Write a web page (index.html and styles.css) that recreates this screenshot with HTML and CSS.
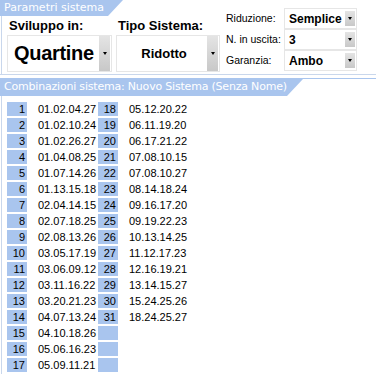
FILE: index.html
```html
<!DOCTYPE html>
<html>
<head>
<meta charset="utf-8">
<link rel="stylesheet" href="styles.css">
</head>
<body>
<div class="panel1">
  <div class="p1-left">
    <div class="tab tab1">Parametri sistema</div>
    <div class="p1-body">
      <div class="bigcol">
        <div class="biglabel">Sviluppo in:</div>
        <div class="combo big">
          <div class="cval quart">Quartine</div>
          <div class="btn"><span class="arrow"></span></div>
        </div>
      </div>
      <div class="bigcol col2">
        <div class="biglabel">Tipo Sistema:</div>
        <div class="combo big">
          <div class="cval rid">Ridotto</div>
          <div class="btn"><span class="arrow"></span></div>
        </div>
      </div>
    </div>
  </div>
  <div class="p1-right">
    <div class="srow">
      <div class="slabel">Riduzione:</div>
      <div class="combo small"><div class="cval sv">Semplice</div><div class="btn sbtn"><span class="arrow"></span></div></div>
    </div>
    <div class="srow">
      <div class="slabel">N. in uscita:</div>
      <div class="combo small"><div class="cval sv">3</div><div class="btn sbtn"><span class="arrow"></span></div></div>
    </div>
    <div class="srow">
      <div class="slabel">Garanzia:</div>
      <div class="combo small"><div class="cval sv">Ambo</div><div class="btn sbtn"><span class="arrow"></span></div></div>
    </div>
  </div>
</div>

<div class="panel2">
  <div class="tab tab2">Combinazioni sistema: Nuovo Sistema (Senza Nome)</div>
  <div class="p2-body">
    <div class="grid">
      <div class="n">1</div><div class="c">01.02.04.27</div><div class="n">18</div><div class="c">05.12.20.22</div>
      <div class="n">2</div><div class="c">01.02.10.24</div><div class="n">19</div><div class="c">06.11.19.20</div>
      <div class="n">3</div><div class="c">01.02.26.27</div><div class="n">20</div><div class="c">06.17.21.22</div>
      <div class="n">4</div><div class="c">01.04.08.25</div><div class="n">21</div><div class="c">07.08.10.15</div>
      <div class="n">5</div><div class="c">01.07.14.26</div><div class="n">22</div><div class="c">07.08.10.27</div>
      <div class="n">6</div><div class="c">01.13.15.18</div><div class="n">23</div><div class="c">08.14.18.24</div>
      <div class="n">7</div><div class="c">02.04.14.15</div><div class="n">24</div><div class="c">09.16.17.20</div>
      <div class="n">8</div><div class="c">02.07.18.25</div><div class="n">25</div><div class="c">09.19.22.23</div>
      <div class="n">9</div><div class="c">02.08.13.26</div><div class="n">26</div><div class="c">10.13.14.25</div>
      <div class="n">10</div><div class="c">03.05.17.19</div><div class="n">27</div><div class="c">11.12.17.23</div>
      <div class="n">11</div><div class="c">03.06.09.12</div><div class="n">28</div><div class="c">12.16.19.21</div>
      <div class="n">12</div><div class="c">03.11.16.22</div><div class="n">29</div><div class="c">13.14.15.27</div>
      <div class="n">13</div><div class="c">03.20.21.23</div><div class="n">30</div><div class="c">15.24.25.26</div>
      <div class="n">14</div><div class="c">04.07.13.24</div><div class="n">31</div><div class="c">18.24.25.27</div>
      <div class="n">15</div><div class="c">04.10.18.26</div><div class="n"></div><div class="c"></div>
      <div class="n">16</div><div class="c">05.06.16.23</div><div class="n"></div><div class="c"></div>
      <div class="n">17</div><div class="c">05.09.11.21</div><div class="n"></div><div class="c"></div>
    </div>
  </div>
</div>
</body>
</html>
```

FILE: styles.css
```css
html, body {
  margin: 0;
  padding: 0;
  background: #ffffff;
}
body {
  width: 376px;
  height: 374px;
  overflow: hidden;
  font-family: "Liberation Sans", Arial, sans-serif;
  color: #000;
}

.tab {
  background: #a9c5ee;
  color: #ffffff;
  font-family: "DejaVu Sans", Verdana, sans-serif;
  font-size: 11px;
  box-sizing: border-box;
  padding-left: 4px;
  white-space: nowrap;
}

/* ---------- panel 1 ---------- */
.panel1 {
  display: flex;
  height: 75px;
  box-sizing: border-box;
  border-bottom: 1px solid #c9d7ec;
}
.p1-left {
  display: flex;
  flex-direction: column;
}
.tab1 {
  width: 123px;
  height: 16px;
  line-height: 16px;
  clip-path: polygon(0 0, 123px 0, 108px 16px, 0 16px);
}
.p1-body {
  flex: 1;
  display: flex;
  gap: 4px;
  margin-left: 1px;
  border-left: 1px solid #c9d7ec;
  padding-left: 5px;
}
.bigcol {
  display: flex;
  flex-direction: column;
}
.biglabel {
  font-weight: bold;
  font-size: 13px;
  height: 17px;
  line-height: 17px;
  padding-left: 2px;
  margin-top: 1px;
  margin-bottom: 1px;
}
.combo {
  display: flex;
  box-sizing: border-box;
  border: 1px solid #e6e6e6;
  background: #fff;
}
.combo.big {
  width: 105px;
  height: 37px;
}
.col2 .combo.big {
  width: 104px;
}
.cval {
  flex: 1;
  display: flex;
  align-items: center;
  font-weight: bold;
  white-space: nowrap;
}
.quart {
  font-size: 20px;
  padding-left: 6px;
  letter-spacing: -0.3px;
}
.rid {
  font-size: 13px;
  justify-content: center;
  padding-left: 4px;
}
.btn {
  width: 11px;
  margin: 0 1px 0 0;
  background: linear-gradient(to bottom, #e4e4e4, #c8c8c8);
  display: flex;
  align-items: center;
  justify-content: center;
}
.arrow {
  width: 0;
  height: 0;
  border-left: 2.5px solid transparent;
  border-right: 2.5px solid transparent;
  border-top: 3px solid #000;
}

.p1-right {
  margin-left: 6px;
  padding-top: 8px;
  display: flex;
  flex-direction: column;
}
.srow {
  display: flex;
  align-items: center;
  height: 21px;
}
.slabel {
  width: 58px;
  font-size: 10.5px;
  white-space: nowrap;
  padding-bottom: 2px;
}
.combo.small {
  width: 73px;
  height: 21px;
}
.sv {
  font-size: 12px;
  padding-left: 4px;
}
.sbtn {
  width: 10px;
  margin: 2px 1px 2px 0;
}

/* ---------- panel 2 ---------- */
.panel2 {
  margin-top: 3px;
  border-top: 1px solid #a9c5ee;
}
.tab2 {
  width: 303px;
  height: 17px;
  line-height: 16px;
  letter-spacing: -0.2px;
  clip-path: polygon(0 0, 303px 0, 287px 17px, 0 17px);
}
.p2-body {
  box-sizing: border-box;
  margin-left: 1px;
  border-left: 1px solid #c9d7ec;
  height: 278px;
  padding-top: 6px;
  padding-left: 5px;
}
.grid {
  display: grid;
  grid-template-columns: 20px 71px 20px 80px;
  grid-auto-rows: 14px;
  row-gap: 2px;
  font-size: 11px;
  line-height: 14px;
}
.n {
  background: #a9c5ee;
  text-align: right;
  padding-right: 2px;
}
.c {
  padding-left: 11px;
}
```
